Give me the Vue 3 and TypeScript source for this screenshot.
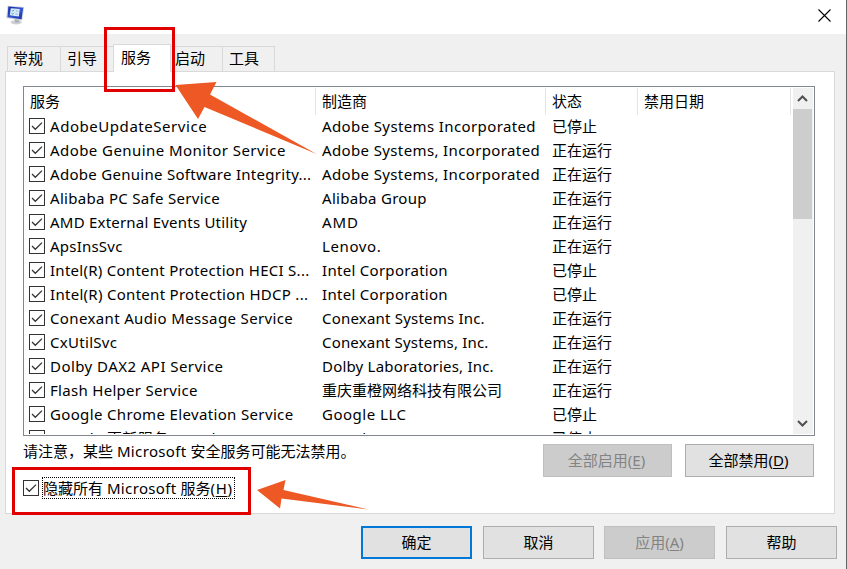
<script setup lang="ts">
import { ref } from 'vue'

interface Label {
  text: string
  tracking: number
}

interface Service {
  name: Label
  maker: Label
  state: string
}

const label = (text: string, tracking: number): Label => ({ text, tracking })
const spacing = (l: Label) => ({ letterSpacing: `${l.tracking}px` })

const tabs = ['常规', '引导', '服务', '启动', '工具']
const activeTab = ref(2)
const columns = ['服务', '制造商', '状态', '禁用日期']
const running = '正在运行'
const stopped = '已停止'

const services: Service[] = [
  { name: label('AdobeUpdateService', 0.55), maker: label('Adobe Systems Incorporated', 0.38), state: stopped },
  { name: label('Adobe Genuine Monitor Service', 0.43), maker: label('Adobe Systems, Incorporated', 0.37), state: running },
  { name: label('Adobe Genuine Software Integrity...', 0.29), maker: label('Adobe Systems, Incorporated', 0.37), state: running },
  { name: label('Alibaba PC Safe Service', 0.3), maker: label('Alibaba Group', 0.3), state: running },
  { name: label('AMD External Events Utility', 0.22), maker: label('AMD', 0.9), state: running },
  { name: label('ApsInsSvc', 0.22), maker: label('Lenovo.', 0.6), state: running },
  { name: label('Intel(R) Content Protection HECI S...', 0.27), maker: label('Intel Corporation', 0.29), state: stopped },
  { name: label('Intel(R) Content Protection HDCP ...', 0.29), maker: label('Intel Corporation', 0.29), state: stopped },
  { name: label('Conexant Audio Message Service', 0.36), maker: label('Conexant Systems Inc.', 0.2), state: running },
  { name: label('CxUtilSvc', 0.3), maker: label('Conexant Systems, Inc.', 0.18), state: running },
  { name: label('Dolby DAX2 API Service', 0.45), maker: label('Dolby Laboratories, Inc.', 0.2), state: running },
  { name: label('Flash Helper Service', 0.3), maker: label('重庆重橙网络科技有限公司', 0), state: running },
  { name: label('Google Chrome Elevation Service', 0.35), maker: label('Google LLC', 0.5), state: stopped },
  { name: label('Google 更新服务 (gupdate)', 0.35), maker: label('Google LLC', 0.5), state: stopped },
]
</script>

<template>
  <div class="window">
    <header class="titlebar">
      <svg class="app-icon" width="20" height="22" viewBox="0 0 20 22">
        <defs>
          <linearGradient id="screen" x1="0" y1="0" x2="1" y2="1">
            <stop offset="0" stop-color="#1626a4" />
            <stop offset="0.55" stop-color="#3457d0" />
            <stop offset="1" stop-color="#1a2f9e" />
          </linearGradient>
        </defs>
        <ellipse cx="10.200" cy="17.200" rx="5.600" ry="2.200" fill="#d0d1d3" />
        <path d="M8.500 13.500l5 1-.5 3.200h-4z" fill="#b0b3b8" />
        <path d="M1.600.7L18.200 2l-2 13.600L.2 12.900z" fill="#cdd0d9" />
        <path d="M2.400 1.500l14.800 1.200-1.700 11.500-14-2z" fill="url(#screen)" />
        <path d="M4.800 3.200l9 .7-1 7.500-9-1.200z" fill="#dcecfb" />
        <path d="M5.800 5.300l1 .9 1.400-1.500M5.500 8.300l1 .9 1.400-1.500" fill="none" stroke="#3aa7a0" />
        <path d="M9.600 5.900l2.700.2M9.300 8.900l2.700.3" stroke="#8fb4ea" />
      </svg>
      <svg class="close" width="13" height="13" viewBox="0 0 13 13">
        <path d="M.5 .5l12 12M12.500 .5l-12 12" stroke="#000" stroke-width="1.100" />
      </svg>
    </header>

    <nav class="tabs">
      <button
        v-for="(tab, i) in tabs"
        :key="tab"
        class="tab"
        :class="{ active: i === activeTab }"
        @click="activeTab = i"
      >{{ tab }}</button>
    </nav>

    <main class="panel">
      <section class="list">
        <div class="table">
          <div class="row head">
            <span v-for="c in columns" :key="c" class="cell">{{ c }}</span>
          </div>
          <div v-for="s in services" :key="s.name.text" class="row">
            <span class="cell first">
              <svg class="check" width="16" height="16" viewBox="0 0 16 16">
                <rect x=".5" y=".5" width="15" height="15" fill="#fff" stroke="#333" />
                <path d="M3 8l3.300 3.300L13 4.600" fill="none" stroke="#333" stroke-width="1.300" />
              </svg>
              <span :style="spacing(s.name)">{{ s.name.text }}</span>
            </span>
            <span class="cell" :style="spacing(s.maker)">{{ s.maker.text }}</span>
            <span class="cell">{{ s.state }}</span>
            <span class="cell"></span>
          </div>
        </div>
        <div class="scrollbar">
          <svg class="arrow" width="19" height="21" viewBox="0 0 19 21">
            <path d="M5 13l4.500-4.500L14 13" fill="none" stroke="#505050" stroke-width="2" />
          </svg>
          <div class="thumb"></div>
          <svg class="arrow down" width="19" height="21" viewBox="0 0 19 21">
            <path d="M5 8l4.500 4.500L14 8" fill="none" stroke="#505050" stroke-width="2" />
          </svg>
        </div>
      </section>

      <div class="below">
        <p class="note">请注意，某些 <span class="ms">Microsoft</span> 安全服务可能无法禁用。</p>
        <div class="bulk">
          <button class="btn wide" disabled>全部启用(<u>E</u>)</button>
          <button class="btn wide">全部禁用(<u>D</u>)</button>
        </div>
      </div>

      <label class="hide">
        <svg width="16" height="16" viewBox="0 0 16 16">
          <rect x=".5" y=".5" width="15" height="15" fill="#fff" stroke="#333" />
          <path d="M3 8l3.300 3.300L13 4.600" fill="none" stroke="#333" stroke-width="1.300" />
        </svg>
        <span class="focus">隐藏所有 <span class="ms">Microsoft</span> 服务<span class="key">(<u>H</u>)</span></span>
      </label>
    </main>

    <footer class="actions">
      <div class="pair">
        <button class="btn primary">确定</button>
        <button class="btn">取消</button>
      </div>
      <div class="pair">
        <button class="btn" disabled>应用(<u>A</u>)</button>
        <button class="btn">帮助</button>
      </div>
    </footer>

    <div class="mark mark-tab"></div>
    <div class="mark mark-hide"></div>
    <svg class="pointers" width="847" height="569" viewBox="0 0 847 569">
      <path d="M175.500 85L216.500 82L210 94.500L316.500 154L204.500 107L198 119Z" />
      <path d="M257 490L285.500 480L283.500 490L368.500 509.500L281.500 498.500L280 508.500Z" />
    </svg>
  </div>
</template>

<style>
body {
  margin: 0;
  overflow: hidden;
}
</style>

<style scoped>
.window {
  position: relative;
  box-sizing: border-box;
  width: 847px;
  height: 569px;
  display: flex;
  flex-direction: column;
  background: #f0f0f0;
  border-right: 1px solid #646464;
  font-family: 'Noto Sans', 'Noto Sans CJK SC', sans-serif;
  font-size: 15px;
  color: #000;
  overflow: hidden;
}

button {
  font: inherit;
  color: inherit;
  padding: 0;
  box-sizing: border-box;
}

.titlebar {
  flex: none;
  height: 34px;
  box-sizing: border-box;
  background: #fff;
  display: flex;
  justify-content: space-between;
  align-items: flex-start;
  padding: 5px 15px 0 6px;
}

.close {
  margin-top: 4px;
}

.tabs {
  flex: none;
  height: 38px;
  box-sizing: border-box;
  display: flex;
  align-items: flex-end;
  padding-left: 7px;
  position: relative;
  z-index: 1;
}

.tab {
  width: 54px;
  height: 26px;
  border: 1px solid #d9d9d9;
  border-right: 0;
  background: #f0f0f0;
  line-height: 22px;
  text-align: left;
  padding: 0 0 2px 5px;
}

.tab:first-child {
  width: 53px;
}

.tab:nth-child(2) {
  width: 53px;
  padding-left: 6px;
}

.tab:nth-child(4) {
  width: 51px;
  padding-left: 4px;
  border-left: 0;
}

.tab:last-child {
  width: 53px;
  padding-left: 6px;
  border-right: 1px solid #d9d9d9;
}

.tab.active {
  width: 58px;
  height: 28px;
  padding: 0 0 4px 7px;
  background: #fff;
  border-right: 1px solid #d9d9d9;
  border-bottom: 0;
}

.panel {
  flex: none;
  width: 830px;
  height: 443px;
  box-sizing: border-box;
  margin: -1px 0 0 5px;
  border: 1px solid #d9d9d9;
  background: #fff;
  padding: 14px 19px 0 17px;
}

.list {
  box-sizing: border-box;
  width: 792px;
  height: 350px;
  border: 1px solid #828790;
  display: flex;
  justify-content: space-between;
  overflow: hidden;
  padding: 1px 1px 1px 0;
}

.table {
  width: 768px;
  height: 346px;
  overflow: hidden;
}

.row {
  display: grid;
  grid-template-columns: 292px 230px 92px 153px;
  height: 24px;
  line-height: 24px;
  white-space: nowrap;
}

.cell {
  padding-left: 6px;
}

.cell.first {
  display: flex;
  align-items: center;
  padding-left: 5px;
  gap: 5px;
}

.head {
  height: 26px;
  line-height: 27px;
}

.head .cell {
  border-right: 1px solid #e5e5e5;
}

.scrollbar {
  width: 20px;
  background: #f0f0f0;
  display: flex;
  flex-direction: column;
}

.arrow {
  flex: none;
}

.down {
  margin-top: auto;
}

.thumb {
  height: 110px;
  width: 19px;
  background: #cdcdcd;
}

.below {
  display: flex;
  justify-content: space-between;
  width: 791px;
  height: 42px;
}

.note {
  margin: 3px 0 0;
  line-height: 24px;
  white-space: nowrap;
}

.ms {
  letter-spacing: 0.35px;
}

.key {
  letter-spacing: 0.7px;
}

.bulk {
  display: flex;
  gap: 13px;
  padding-top: 8px;
}

.btn {
  width: 111px;
  height: 33px;
  border: 1px solid #adadad;
  background: #e1e1e1;
  line-height: 31px;
}

.btn.wide {
  width: 129px;
  padding-right: 2px;
}

.btn:disabled {
  background: #ccc;
  border-color: #bfbfbf;
  color: #838383;
}

.btn.primary {
  border: 2px solid #0078d7;
  line-height: 29px;
}

.hide {
  display: flex;
  width: max-content;
  align-items: center;
  gap: 3px;
  margin-top: -1px;
}

.focus {
  box-sizing: border-box;
  width: 193px;
  height: 22px;
  line-height: 21px;
  border: 1px dotted #000;
  white-space: nowrap;
}

u {
  text-underline-offset: 2px;
  text-decoration-thickness: 1px;
}

.actions {
  display: flex;
  gap: 10px;
  justify-content: flex-end;
  padding: 12px 9px 0 0;
}

.pair {
  display: flex;
  gap: 11px;
}

.mark {
  position: absolute;
  box-sizing: border-box;
  border: 3px solid #e00000;
  z-index: 2;
}

.mark-tab {
  left: 104px;
  top: 27px;
  width: 71px;
  height: 65px;
}

.mark-hide {
  left: 12px;
  top: 467px;
  width: 239px;
  height: 48px;
}

.pointers {
  position: absolute;
  inset: 0;
  z-index: 3;
  fill: #ed5824;
  pointer-events: none;
}
</style>
